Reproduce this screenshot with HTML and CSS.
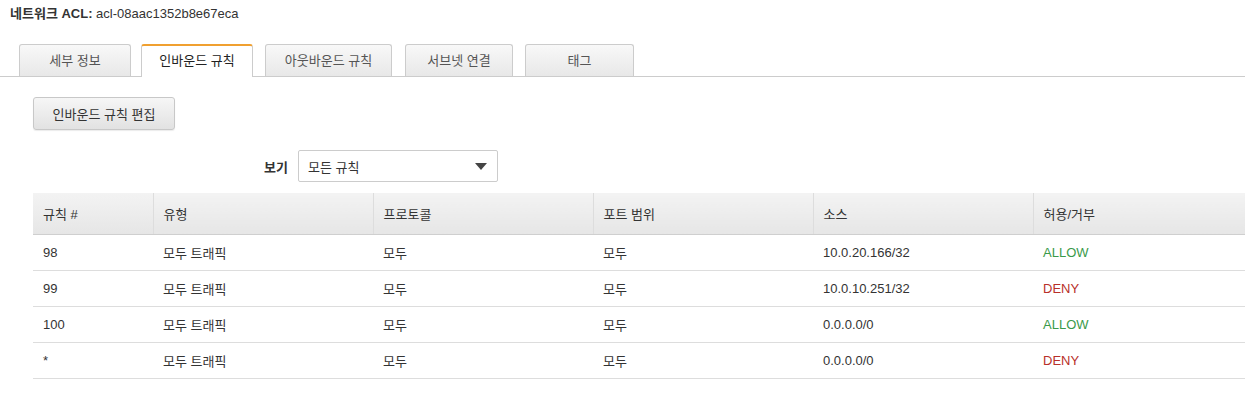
FILE: index.html
```html
<!DOCTYPE html>
<html lang="ko">
<head>
    <meta charset="UTF-8">
    <title>네트워크 ACL</title>
    <link rel="stylesheet" href="styles.css">
</head>
<body>

<div class="title"><b>네트워크 ACL:</b> acl-08aac1352b8e67eca</div>

<div class="tabs">
    <div class="tab">세부 정보</div>
    <div class="tab active">인바운드 규칙</div>
    <div class="tab">아웃바운드 규칙</div>
    <div class="tab">서브넷 연결</div>
    <div class="tab">태그</div>
</div>

<div class="panel">
    <button class="edit-btn">인바운드 규칙 편집</button>

    <div class="filter">
        <label>보기</label>
        <div class="select">
            <span>모든 규칙</span>
            <svg width="12" height="7" viewBox="0 0 12 7"><path d="M0 0h12L6 7z" fill="#444"/></svg>
        </div>
    </div>

    <table class="rules">
        <thead>
            <tr><th class="c1">규칙 #</th><th>유형</th><th>프로토콜</th><th>포트 범위</th><th>소스</th><th class="last">허용/거부</th></tr>
        </thead>
        <tbody>
            <tr><td>98</td><td>모두 트래픽</td><td>모두</td><td>모두</td><td>10.0.20.166/32</td><td class="allow">ALLOW</td></tr>
            <tr><td>99</td><td>모두 트래픽</td><td>모두</td><td>모두</td><td>10.0.10.251/32</td><td class="deny">DENY</td></tr>
            <tr><td>100</td><td>모두 트래픽</td><td>모두</td><td>모두</td><td>0.0.0.0/0</td><td class="allow">ALLOW</td></tr>
            <tr><td>*</td><td>모두 트래픽</td><td>모두</td><td>모두</td><td>0.0.0.0/0</td><td class="deny">DENY</td></tr>
        </tbody>
    </table>
</div>

</body>
</html>
```

FILE: styles.css
```css
body { margin: 0; font-family: "Liberation Sans", "Noto Sans CJK KR", sans-serif; font-size: 13px; color: #333; background: #fff; }
.title { padding: 5px 10px 0; height: 22px; line-height: 18px; color: #333; }
.title b { font-weight: bold; }

.tabs { display: flex; gap: 10px; padding: 17px 0 0 19px; border-bottom: 1px solid #ccc; height: 32px; }
.tab { height: 32px; line-height: 31px; padding: 0; white-space: nowrap; background: linear-gradient(#f8f8f8, #e8e8e8); border: 1px solid #ccc; border-bottom: none; border-radius: 3px 3px 0 0; color: #555; text-align: center; box-sizing: border-box; }
.tab:nth-child(1) { width: 112px; }
.tab:nth-child(2) { width: 112px; }
.tab:nth-child(3) { width: 127px; margin-left: 2px; }
.tab:nth-child(4) { width: 108px; margin-left: 3px; }
.tab:nth-child(5) { width: 109px; margin-left: 2px; }
.tab.active { background: #fff; border-top: 2px solid #f0a030; height: 33px; line-height: 30px; margin-bottom: -1px; color: #222; }

.panel { padding: 20px 0 0 33px; }
.edit-btn { height: 33px; width: 142px; padding: 0; font-family: inherit; font-size: 13px; color: #333; background: linear-gradient(#f6f6f6, #e2e2e2); border: 1px solid #c8c8c8; border-radius: 3px; box-shadow: 0 1px 1px rgba(0,0,0,0.08); }

.filter { display: flex; align-items: center; margin: 20px 0 0 231px; height: 32px; }
.filter label { font-weight: bold; margin-right: 10px; color: #333; }
.select { display: flex; align-items: center; justify-content: space-between; width: 200px; height: 32px; box-sizing: border-box; padding: 0 10px 0 9px; border: 1px solid #ccc; border-radius: 2px; color: #333; }

.rules { border-collapse: collapse; width: 1212px; margin-top: 11px; table-layout: fixed; }
.rules th { height: 41px; width: 220px; text-align: left; font-weight: normal; color: #333; padding: 0 10px; background: linear-gradient(#f3f3f3, #e6e6e6); border-bottom: 1px solid #cfcfcf; box-sizing: border-box; }
.rules th.c1 { width: 120px; }
.rules th.last { width: 212px; }
.rules th + th { border-left: 1px solid #ddd; }
.rules td { height: 35px; padding: 0 10px; border-bottom: 1px solid #ddd; color: #333; }
.rules .allow { color: #3a9a4a; }
.rules .deny { color: #b8302a; }
```
